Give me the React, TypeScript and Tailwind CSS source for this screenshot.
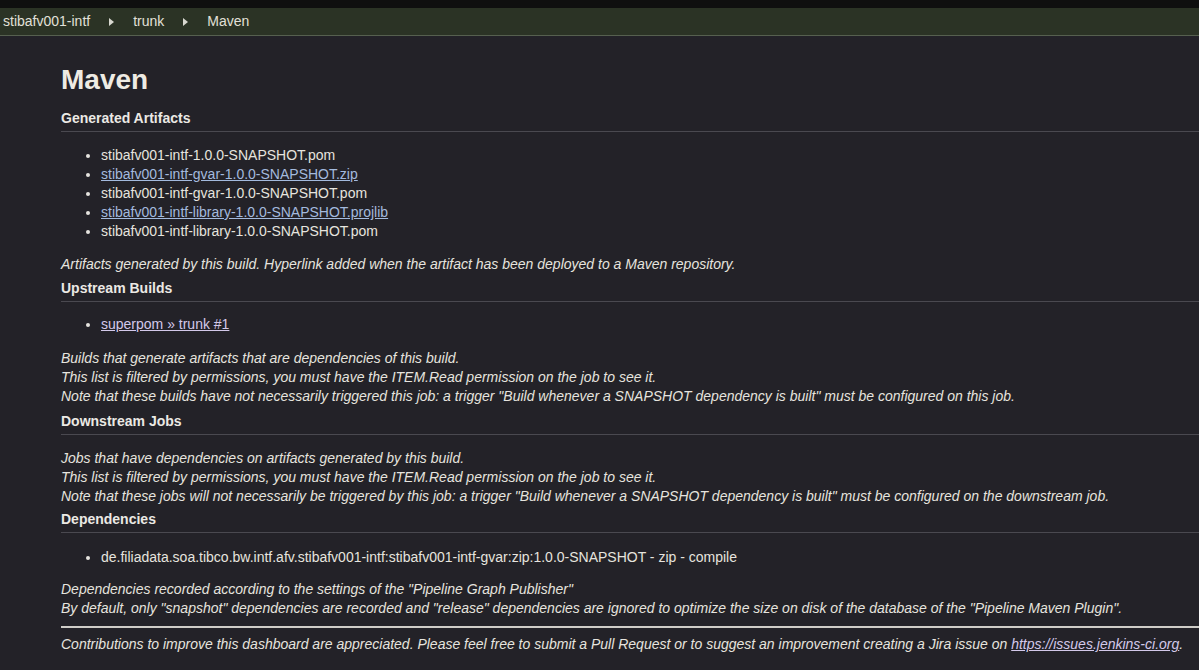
import React from "react";

const Arrow = () => (
  <svg width="5" height="8" viewBox="0 0 5 8" className="mx-[19px]">
    <path d="M0 0 L5 4 L0 8 Z" fill="#d8d8d0" />
  </svg>
);

const H3 = ({ children }: { children: React.ReactNode }) => (
  <h3 className="text-[14px] leading-[19px] font-bold text-[#ebe9e4] pb-[3px] border-b border-[#4a4950]">
    {children}
  </h3>
);

export default function App() {
  return (
    <div
      className="w-[1199px] h-[670px] overflow-hidden bg-[#232228] text-[#e6e4df]"
      style={{ fontFamily: '"Liberation Sans", Arial, sans-serif' }}
    >
      <div className="h-[8px] bg-[#0f0f0f]" />
      <div className="h-[28px] bg-[#2b3325] border-b border-[#56604f] flex items-center pl-[3px] text-[14px] text-[#e2e0d8]">
        <span>stibafv001-intf</span>
        <Arrow />
        <span>trunk</span>
        <Arrow />
        <span>Maven</span>
      </div>
      <div className="pl-[61px]">
        <h1 className="mt-[28px] text-[28px] leading-[32px] font-bold text-[#eeebe3]">Maven</h1>
        <div className="mt-[13px]">
          <H3>Generated Artifacts</H3>
        </div>
        <ul className="mt-[14px] pl-[40px] list-disc text-[14px] leading-[19px]">
          <li>stibafv001-intf-1.0.0-SNAPSHOT.pom</li>
          <li>
            <a className="underline text-[#a3bade]">stibafv001-intf-gvar-1.0.0-SNAPSHOT.zip</a>
          </li>
          <li>stibafv001-intf-gvar-1.0.0-SNAPSHOT.pom</li>
          <li>
            <a className="underline text-[#a3bade]">stibafv001-intf-library-1.0.0-SNAPSHOT.projlib</a>
          </li>
          <li>stibafv001-intf-library-1.0.0-SNAPSHOT.pom</li>
        </ul>
        <p className="mt-[14px] italic text-[14px] leading-[19px]">
          Artifacts generated by this build. Hyperlink added when the artifact has been deployed to a Maven repository.
        </p>
        <div className="mt-[5px]">
          <H3>Upstream Builds</H3>
        </div>
        <ul className="mt-[13px] pl-[40px] list-disc text-[14px] leading-[19px]">
          <li>
            <a className="underline text-[#d3c9ea]">superpom » trunk #1</a>
          </li>
        </ul>
        <p className="mt-[15px] italic text-[14px] leading-[19px]">
          Builds that generate artifacts that are dependencies of this build.
          <br />
          This list is filtered by permissions, you must have the ITEM.Read permission on the job to see it.
          <br />
          Note that these builds have not necessarily triggered this job: a trigger "Build whenever a SNAPSHOT dependency is built" must be configured on this job.
        </p>
        <div className="mt-[6px]">
          <H3>Downstream Jobs</H3>
        </div>
        <p className="mt-[14px] italic text-[14px] leading-[19px]">
          Jobs that have dependencies on artifacts generated by this build.
          <br />
          This list is filtered by permissions, you must have the ITEM.Read permission on the job to see it.
          <br />
          Note that these jobs will not necessarily be triggered by this job: a trigger "Build whenever a SNAPSHOT dependency is built" must be configured on the downstream job.
        </p>
        <div className="mt-[4px]">
          <H3>Dependencies</H3>
        </div>
        <ul className="mt-[15px] pl-[40px] list-disc text-[14px] leading-[19px]">
          <li>de.filiadata.soa.tibco.bw.intf.afv.stibafv001-intf:stibafv001-intf-gvar:zip:1.0.0-SNAPSHOT - zip - compile</li>
        </ul>
        <p className="mt-[13px] italic text-[14px] leading-[19px]">
          Dependencies recorded according to the settings of the "Pipeline Graph Publisher"
          <br />
          By default, only "snapshot" dependencies are recorded and "release" dependencies are ignored to optimize the size on disk of the database of the "Pipeline Maven Plugin".
        </p>
        <div className="mt-[8px] h-[2px] bg-[#cfcdc8]" />
        <p className="mt-[7px] italic text-[14px] leading-[19px]">
          Contributions to improve this dashboard are appreciated. Please feel free to submit a Pull Request or to suggest an improvement creating a Jira issue on{" "}
          <a className="underline text-[#d3c9ea]">https://issues.jenkins-ci.org</a>.
        </p>
      </div>
    </div>
  );
}
